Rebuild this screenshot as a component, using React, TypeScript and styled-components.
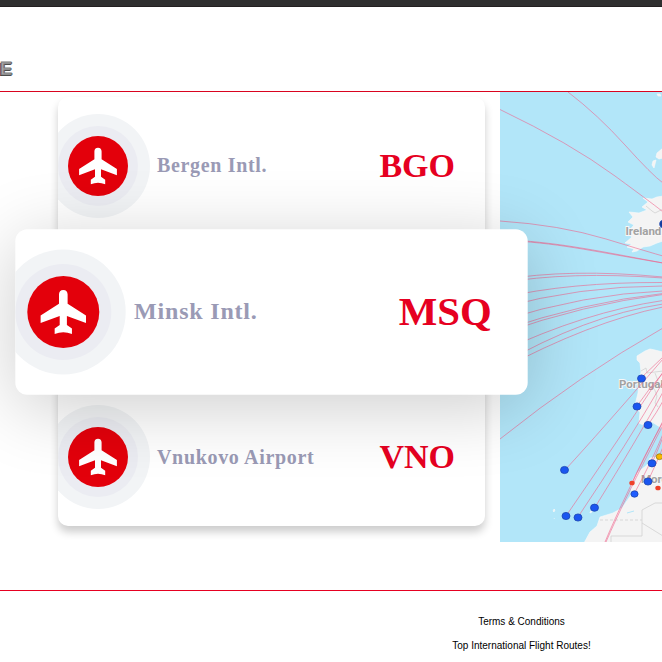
import React from "react";
import styled, { createGlobalStyle } from "styled-components";

const GlobalStyle = createGlobalStyle`
  * { box-sizing: border-box; }
  body { margin: 0; background: #fff; overflow: hidden; }
`;

const Page = styled.div`
  width: 662px;
  height: 662px;
  overflow: hidden;
  display: flex;
  flex-direction: column;
`;

const TopBar = styled.div`
  height: 7px;
  flex: none;
  background: #2f2f2f;
  border-bottom: 1px solid #231f20;
`;

const Header = styled.header`
  height: 85px;
  flex: none;
  padding-top: 52px;
  border-bottom: 1px solid #d9041f;
`;

const LogoLetter = styled.div`
  font: bold 18px/20px "Liberation Sans", Arial, sans-serif;
  color: #a8a8a8;
  -webkit-text-stroke: 1px #7c7c7c;
  text-shadow: -1px 1px 0 #111, 0 1px 0 #222, 1px 0 0 #555;
`;

const Content = styled.main`
  display: flex;
  height: 498px;
  flex: none;
  padding-left: 58px;
`;

const Board = styled.section`
  width: 427px;
  height: 429.3px;
  margin: 5px 15px 0 0;
  flex: none;
  display: flex;
  flex-direction: column;
  justify-content: space-between;
  border-radius: 10px;
  background: #fff;
  box-shadow: 0 6px 8px rgba(0, 0, 0, 0.2);
  position: relative;
  z-index: 1;
`;

const Airport = styled.div<{ $active?: boolean }>`
  height: 138px;
  display: flex;
  align-items: center;
  padding: 0 30px 0 10px;
  border-radius: 10px;
  overflow: hidden;
  ${(p) =>
    p.$active &&
    `
    background: #fff;
    transform: scale(1.2);
    z-index: 2;
    box-shadow: 0 10px 60px rgba(0, 0, 0, 0.2);
  `}
`;

const Badge = styled.div`
  width: 60px;
  height: 60px;
  flex: none;
  border-radius: 50%;
  background: #e3000b;
  box-shadow: 0 0 0 10px #ebecf2, 0 0 0 22px #f2f4f6;
  margin-right: 29px;
`;

const Name = styled.div`
  flex: 1;
  padding-bottom: 1.2px;
  font: bold 20px/24px "Liberation Serif", "Times New Roman", serif;
  letter-spacing: 0.67px;
  color: #9a9ab5;
  white-space: nowrap;
`;

const Code = styled.div`
  font: bold 34px/40px "Liberation Serif", "Times New Roman", serif;
  color: #e60021;
`;

const MapSvg = styled.svg`
  width: 162px;
  height: 450px;
  flex: none;
  display: block;
  background: #b2e6f9;
`;

const MapLabel = styled.text`
  font: bold 11.5px Roboto, sans-serif;
  fill: #a2a2a2;
  stroke: #f7f7f7;
  stroke-width: 2px;
  paint-order: stroke;
`;

const Footer = styled.footer`
  flex: 1;
  border-top: 1px solid #e60021;
  padding: 19px 0 0 381px;
  display: flex;
  flex-direction: column;
`;

const FooterLink = styled.a`
  width: 281px;
  text-align: center;
  font: 10px/24px "Liberation Sans", Arial, sans-serif;
  color: #000;
`;

function Plane() {
  return (
    <svg width="60" height="60" viewBox="-30 -30 60 60" fill="#fff">
      <path d="M0-18.3C2.4-18.3 3.6-16.6 3.6-14.5V-6.8L18.9 2.9V9.2L3 3.3V10.8L7.2 13.8V18.3Q0 15.3-7.2 18.3V13.8L-3 10.8V3.3L-18.9 9.2V2.9L-3.6-6.8V-14.5C-3.6-16.6-2.4-18.3 0-18.3Z" />
    </svg>
  );
}

const routes = [
  "M0 17.5Q70 51 115 84T163 120",
  "M68 0Q98 23 125 53T163 91",
  "M0 129Q60 133 106 147T163 164",
  "M0 147C60 151 83 156 163 171",
  "M0 148C60 151 85 158 163 171",
  "M0 188Q70 176 163 185",
  "M0 191Q70 179 163 186",
  "M0 206Q70 190 163 190.5",
  "M0 216Q80 194 163 194",
  "M0 229Q85 202 163 199",
  "M0 239Q85 210 163 201.5",
  "M0 242Q85 212 163 202.5",
  "M0 260Q85 220 163 208.5",
  "M0 273Q85 224 163 212",
  "M0 278Q90 230 163 215",
  "M0 347Q80 283 163 236",
  "M65 378Q100 340 163 267",
  "M66 424Q117 350 163 280",
  "M78 425Q127 352 163 290",
  "M94.5 416Q138 346 163 300",
  "M105 450Q122 409 163 329",
  "M106 450Q123 410 163 333",
  "M132 391Q142 368 163 330",
  "M134 402Q152 369 163 342",
  "M148 389Q157 370 163 355",
  "M152 371Q158 358 163 345",
  "M141 286L163 265",
  "M137 314Q150 295 163 281",
  "M148 333Q157 320 163 309",
];

const places: [number, number, number, string, string?][] = [
  [164, 132, 4, "#123c9c"],
  [141.5, 286.5, 3.7, "#1a56f0"],
  [137, 314.5, 3.7, "#1a56f0"],
  [148, 333, 3.7, "#1a56f0"],
  [152, 371.3, 3.7, "#1a56f0"],
  [148, 389.5, 3.7, "#1a56f0"],
  [134.5, 402, 3.3, "#1f5dff"],
  [94.5, 415.7, 3.7, "#1a56f0"],
  [66, 424, 3.7, "#1a56f0"],
  [78, 425.5, 3.7, "#1a56f0"],
  [64.5, 378, 3.7, "#1a56f0"],
  [132, 391, 2.4, "#ee4129", "none"],
  [158, 396, 2.4, "#ee4129", "none"],
  [159.5, 364.7, 3, "#f8b800", "#94791a"],
];

function RouteMap() {
  return (
    <MapSvg viewBox="0 0 162 450">
      <g fill="#f4f4f4" stroke="#fafafa" strokeWidth=".6" strokeLinejoin="round">
        <path d="M163 104L157 105L152 107L143 106L148 110L142 115L147 118L139 121L129 120L133 125L128 130L134 133L127 141L132 145L125 151L132 152L127 155L134 157L132 160L137 159L143 155L150 154L157 151L163 149Z" />
        <path d="M163 56L157 61L156 65L159 67L163 66ZM153 69L156 68L154 76L152 73ZM157 2L160 2L161 4L158 4Z" />
        <path d="M163 260L155 258L150 257L145 259L137 264L137 268L140 271L141 280L139 289L138 301L135 313L136 317L140 320L139 331L145 334L152 330L163 337Z" />
        <path d="M163 363L157 365L150 366L147 373L137 381L131 391L131 403L122 416L113 421L100 425L97 434L90 440L84 451H163Z" />
        <path d="M54 417l1 1-1 2-1-1ZM90 420l2-2 0 2-2 1ZM54 426l.6 1" />
      </g>
      <g fill="none" stroke="#d2d2d2" strokeWidth=".8">
        <path d="M141 279L146 276L147 281L163 279M155 281L158 289L154 296L157 304L155 311L158 315M146 114L152 119L155 121L163 117" />
        <path d="M111 450V444H142V418L155 411H163M142 431L163 444" />
        <path d="M100 428H142" strokeDasharray="3 2" />
      </g>
      <path d="M127 421L134 419" stroke="#b2e6f9" />
      <MapLabel x="125.5" y="143">Ireland</MapLabel>
      <MapLabel x="119" y="295.5">Portugal</MapLabel>
      <MapLabel x="141" y="390.5">Morocco</MapLabel>
      <g fill="none" stroke="#f0608a" strokeOpacity=".58">
        {routes.map((d) => (
          <path key={d} d={d} />
        ))}
      </g>
      {places.map(([x, y, r, color, edge]) => (
        <ellipse
          key={`${x}-${y}`}
          cx={x}
          cy={y}
          rx={r + 0.3}
          ry={r - 0.1}
          fill={color}
          stroke={edge ?? "#1a45b0"}
          strokeWidth=".8"
        />
      ))}
    </MapSvg>
  );
}

const airports = [
  { name: "Bergen Intl.", code: "BGO" },
  { name: "Minsk Intl.", code: "MSQ", active: true },
  { name: "Vnukovo Airport", code: "VNO" },
];

export default function App() {
  return (
    <Page>
      <GlobalStyle />
      <TopBar />
      <Header>
        <LogoLetter>E</LogoLetter>
      </Header>
      <Content>
        <Board>
          {airports.map((a) => (
            <Airport key={a.code} $active={a.active}>
              <Badge>
                <Plane />
              </Badge>
              <Name>{a.name}</Name>
              <Code>{a.code}</Code>
            </Airport>
          ))}
        </Board>
        <RouteMap />
      </Content>
      <Footer>
        <FooterLink>Terms &amp; Conditions</FooterLink>
        <FooterLink>Top International Flight Routes!</FooterLink>
      </Footer>
    </Page>
  );
}
